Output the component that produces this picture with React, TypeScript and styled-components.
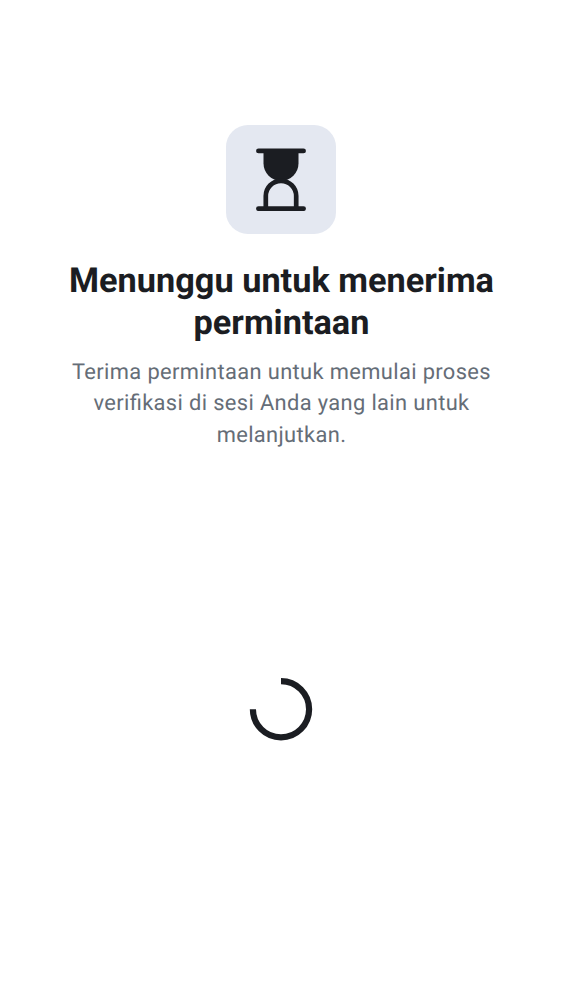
import React from 'react';
import styled, { createGlobalStyle } from 'styled-components';

const GlobalStyle = createGlobalStyle`
  * { box-sizing: border-box; }
  body {
    margin: 0;
    background: #fff;
    font-family: Roboto, sans-serif;
    text-rendering: geometricPrecision;
  }
`;
const Screen = styled.main`
  min-height: 1000px;
  padding: 125px 30px 0 31px;
  display: flex;
  flex-direction: column;
  align-items: center;
`;
const IconTile = styled.div`
  width: 109.375px;
  height: 109.375px;
  margin-right: 1px;
  border-radius: 21.875px;
  background: #e4e8f1;
  display: flex;
  align-items: center;
  justify-content: center;
`;
const Title = styled.h1`
  margin: 26.1px 0 0;
  color: #1b1d22;
  font-size: 34.3px;
  line-height: 42px;
  font-weight: 700;
  text-align: center;
`;
const Message = styled.p`
  margin: 12.7px 0 0;
  color: #656d77;
  font-size: 21.875px;
  line-height: 31.25px;
  letter-spacing: 0.37px;
  font-feature-settings: "liga" 1;
  text-align: center;
`;
const Spinner = styled.svg`
  margin: 227.1px 1px 0 0;
  display: block;
  overflow: visible;
`;

export default function App() {
  return (
    <>
      <GlobalStyle />
      <Screen>
        <IconTile>
          <svg width="50" height="63" viewBox="0 0 50 63" fill="none" stroke="#1b1d22" strokeLinecap="round">
            <path d="M2.5 2.9h45M2.5 60.6h45" strokeWidth="4.9" />
            <path d="M7.5 3h35v12.3a17.5 17.5 0 0 1-35 0z" fill="#1b1d22" stroke="none" />
            <path d="M9.8 60.5V48a15.2 15.2 0 0 1 30.4 0v12.5" strokeWidth="4.7" />
          </svg>
        </IconTile>
        <Title>Menunggu untuk menerima<br />permintaan</Title>
        <Message>Terima permintaan untuk memulai proses<br />verifikasi di sesi Anda yang lain untuk<br />melanjutkan.</Message>
        <Spinner width="62" height="62" viewBox="0 0 62 62" fill="none">
          <path d="M31 3.1A28.1 28.1 0 1 1 2.9 31.2" stroke="#1b1d22" strokeWidth="6.2" />
        </Spinner>
      </Screen>
    </>
  );
}
